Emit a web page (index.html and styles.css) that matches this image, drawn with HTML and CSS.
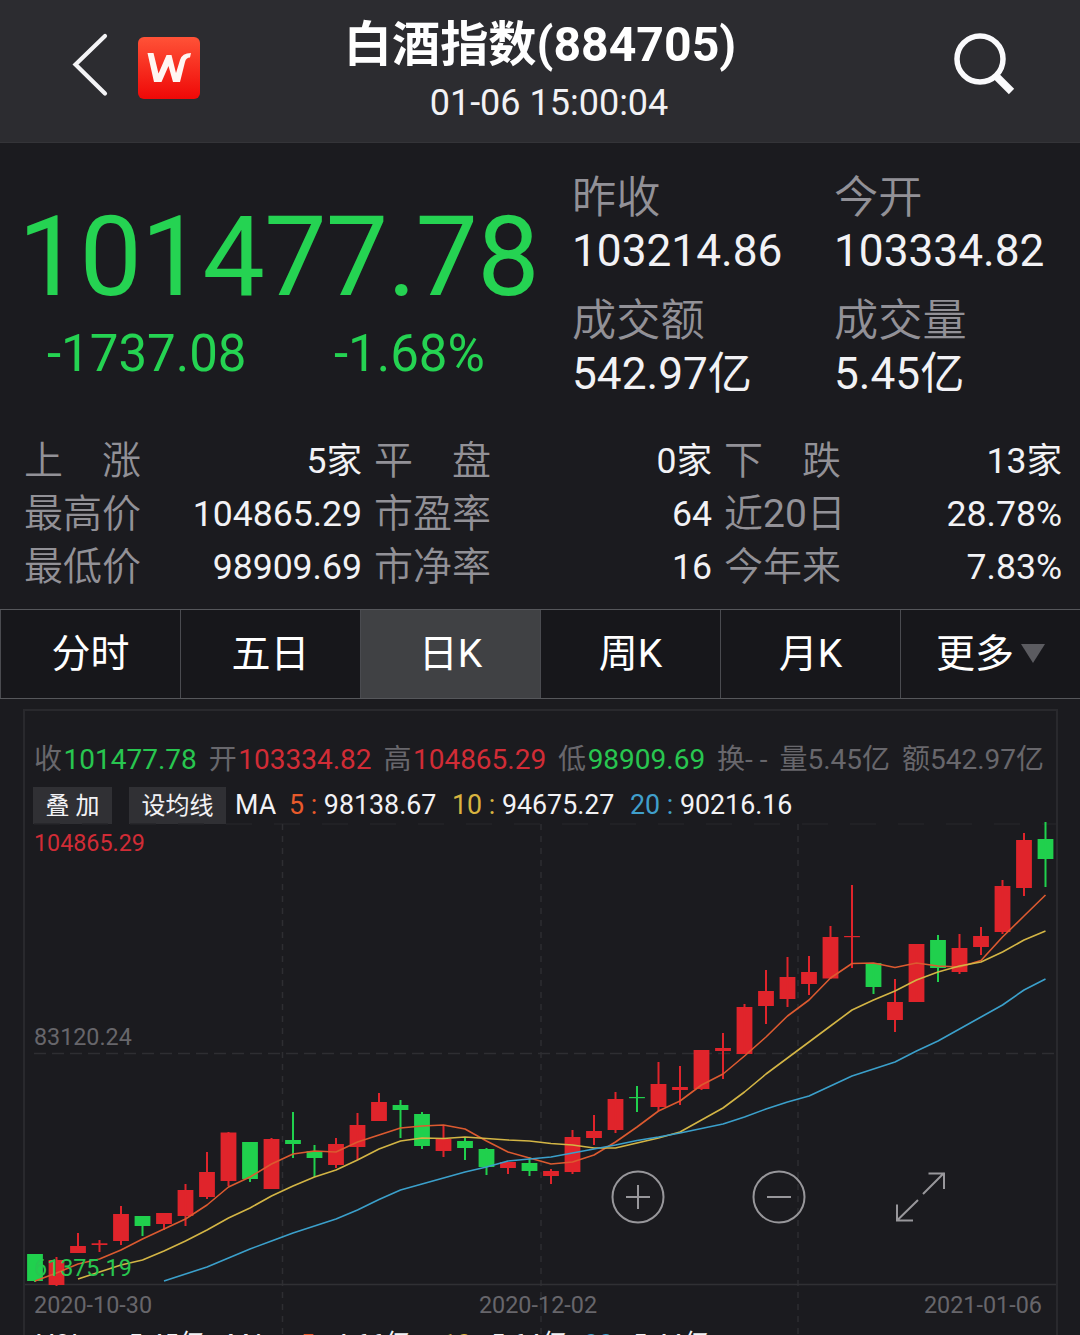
FILE: index.html
```html
<!DOCTYPE html>
<html lang="zh-CN">
<head>
<meta charset="utf-8">
<title>白酒指数(884705)</title>
<link rel="stylesheet" href="styles.css">
</head>
<body>
<div class="app">
  <header class="topbar">
    <div class="topbar-left">
      <svg class="back" viewBox="0 0 36 64" width="36" height="64"><path d="M33 3 3.500 31.500 33 60.500" fill="none" stroke="#f4f4f6" stroke-width="4.200" stroke-linecap="round"/></svg>
      <div class="logo">
        <svg viewBox="0 0 62 62" width="62" height="62"><path d="M9.500 16H15.500L20.500 36.500L28.500 18H33.500L38 36L42 23Q44 16 53 16L52 20.500Q48 20.500 47 25L42 45H35L30.500 29L23.500 45H16Z" fill="#fff6f2"/></svg>
      </div>
    </div>
    <div class="heading">
      <h1 class="title">白酒指数(884705)</h1>
      <div class="time">01-06 15:00:04</div>
    </div>
    <svg class="search" viewBox="0 0 64 64" width="64" height="64"><circle cx="29" cy="27" r="23" fill="none" stroke="#fafafc" stroke-width="5.500"/><path d="M44 43 60.500 59.500" stroke="#fafafc" stroke-width="7.500"/></svg>
  </header>

  <section class="quote">
    <div class="price-block">
      <div class="price">101477.78</div>
      <div class="change"><span>-1737.08</span><span>-1.68%</span></div>
    </div>
    <dl class="facts">
      <div class="fact"><dt>昨收</dt><dd>103214.86</dd></div>
      <div class="fact"><dt>今开</dt><dd>103334.82</dd></div>
      <div class="fact"><dt>成交额</dt><dd>542.97亿</dd></div>
      <div class="fact"><dt>成交量</dt><dd>5.45亿</dd></div>
    </dl>
  </section>

  <dl class="stats">
    <div class="stat"><dt>上　涨</dt><dd>5家</dd></div>
    <div class="stat"><dt>平　盘</dt><dd>0家</dd></div>
    <div class="stat"><dt>下　跌</dt><dd>13家</dd></div>
    <div class="stat"><dt>最高价</dt><dd>104865.29</dd></div>
    <div class="stat"><dt>市盈率</dt><dd>64</dd></div>
    <div class="stat"><dt>近<b>20</b>日</dt><dd>28.78%</dd></div>
    <div class="stat"><dt>最低价</dt><dd>98909.69</dd></div>
    <div class="stat"><dt>市净率</dt><dd>16</dd></div>
    <div class="stat"><dt>今年来</dt><dd>7.83%</dd></div>
  </dl>

  <nav class="tabs">
    <div class="tab">分时</div>
    <div class="tab">五日</div>
    <div class="tab active">日K</div>
    <div class="tab">周K</div>
    <div class="tab">月K</div>
    <div class="tab more">更多<i class="caret"></i></div>
  </nav>

  <section class="chart">
    <div class="info">
      <span>收<b class="down">101477.78</b></span>
      <span>开<b class="up">103334.82</b></span>
      <span>高<b class="up">104865.29</b></span>
      <span>低<b class="down">98909.69</b></span>
      <span>换- -</span>
      <span>量5.45亿</span>
      <span>额542.97亿</span>
    </div>
    <div class="averages">
      <span class="chip chip-add">叠 加</span>
      <span class="chip chip-set">设均线</span>
      <span class="ma-name">MA</span>
      <span class="ma"><b class="ma5">5 :</b> 98138.67</span>
      <span class="ma"><b class="ma10">10 :</b> 94675.27</span>
      <span class="ma"><b class="ma20">20 :</b> 90216.16</span>
    </div>
    <div class="plot">
      <svg class="canvas" id="canvas" viewBox="24 824 1034 460" width="1034" height="460"></svg>
      <span class="label high">104865.29</span>
      <span class="label mid">83120.24</span>
      <span class="label low">61375.19</span>
      <div class="tools">
        <svg viewBox="0 0 56 56" width="56" height="56"><circle cx="28" cy="28" r="25.500"/><path d="M16 28H40M28 16V40"/></svg>
        <svg viewBox="0 0 56 56" width="56" height="56"><circle cx="28" cy="28" r="25.500"/><path d="M16 28H40"/></svg>
        <svg viewBox="0 0 56 56" width="56" height="56"><path d="M31 25 52 4M36.500 4.500H52V20M26 31 5 51.500M5 35.500V51.500H21"/></svg>
      </div>
    </div>
    <div class="dates"><span>2020-10-30</span><span>2020-12-02</span><span>2021-01-06</span></div>
    <div class="volume">
      <span class="v-name">VOL</span>
      <span class="v-total">5.45亿</span>
      <span class="v-ma">MA</span>
      <span class="v-item"><b class="ma5">5 :</b> 4.66亿</span>
      <span class="v-item"><b class="ma10">10 :</b> 5.64亿</span>
      <span class="v-item"><b class="ma20">20 :</b> 5.44亿</span>
    </div>
  </section>
</div>
<script src="chart.js"></script>
</body>
</html>
```

FILE: styles.css
```css
* { box-sizing: border-box; }
body {
  margin: 0;
  background: #1b1b1f;
  color: #f2f2f5;
  font-family: Roboto, "Noto Sans CJK SC", sans-serif;
}
h1, dl, dd { margin: 0; }
b { font-weight: 400; }
.app {
  width: 1080px;
  height: 1335px;
  overflow: hidden;
  display: flex;
  flex-direction: column;
}

.topbar {
  flex: none;
  height: 143px;
  display: grid;
  grid-template-columns: 200px 1fr 200px;
  background: #2c2c30;
  border-bottom: 1px solid #343438;
}
.topbar-left { display: flex; padding: 33px 0 0 72px; }
.back { flex: none; }
.logo {
  flex: none;
  width: 62px;
  height: 62px;
  margin: 4px 0 0 30px;
  border-radius: 6px;
  background: linear-gradient(#ff5237, #ef0807);
}
.heading { display: flex; flex-direction: column; align-items: center; padding-top: 15px; white-space: nowrap; }
.title { font-size: 48.200px; line-height: 60px; font-weight: 700; color: #fff; }
.time { font-size: 36px; line-height: 44px; margin: 6px 0 0 18px; }
.search { margin: 32px 0 0 71px; }

.quote { flex: none; height: 291px; display: flex; padding-left: 18px; }
.price-block { width: 554px; color: #25d352; padding-top: 59px; }
.price { font-size: 111px; line-height: 110px; white-space: nowrap; letter-spacing: -0.850px; }
.change { display: flex; font-size: 51px; line-height: 60px; margin-top: 12px; padding-left: 29px; }
.change span:first-child { width: 287px; }
.facts { display: grid; grid-template-columns: 262px 220px; grid-template-rows: 123px 124px; padding-top: 28px; }
.fact { white-space: nowrap; font-size: 44.200px; }
.fact dt { line-height: 54px; color: #929197; font-weight: 350; }
.fact dd { line-height: 52px; }

.stats {
  flex: none;
  height: 175px;
  display: grid;
  grid-template-columns: repeat(3, 338px);
  grid-template-rows: repeat(3, 53px);
  column-gap: 12px;
  padding: 1px 0 0 24px;
}
.stat { display: flex; justify-content: space-between; line-height: 53px; font-size: 35.600px; white-space: nowrap; }
.stat dt { font-size: 39px; line-height: 52px; color: #929197; font-weight: 350; }

.tabs {
  flex: none;
  height: 90px;
  display: grid;
  grid-template-columns: repeat(6, 180px);
  border: solid #56575b;
  border-width: 1px 0;
  background: #17171b;
}
.tab { border-left: 1px solid #4a4b50; display: flex; align-items: center; justify-content: center; padding-bottom: 8px; font-size: 39px; color: #fff; }
.tab.active { background: #404144; }
.caret { border: solid transparent; border-width: 19px 12px 0; border-top-color: #5b5b60; margin: 7px 0 0 7px; }

.chart {
  flex: none;
  width: 1035px;
  height: 640px;
  margin: 10px 0 0 23px;
  border: 2px solid #29292d;
  border-bottom: 0;
}
.info {
  display: flex;
  justify-content: space-between;
  padding: 29px 12px 0 9px;
  font-size: 28px;
  line-height: 40px;
  color: #68676c;
  white-space: nowrap;
}
.info b { margin-left: 1.500px; }
.down { color: #28c650; }
.up { color: #d12c36; }
.averages { display: flex; height: 44px; padding: 7px 0 0 8px; font-size: 26.800px; line-height: 36px; white-space: nowrap; }
.chip { background: #303034; font-size: 24px; text-align: center; height: 37px; line-height: 38px; }
.chip-add { width: 79px; }
.chip-set { width: 97px; margin-left: 17px; }
.ma-name { width: 54px; margin-left: 9px; }
.ma { width: 163px; }
.ma + .ma { width: 178px; }
.ma5 { color: #e85a2b; }
.ma10 { color: #d8b440; }
.ma20 { color: #409fcb; }
.plot { position: relative; height: 460px; margin-left: -1px; }
.canvas { display: block; overflow: visible; }
.label { position: absolute; left: 10px; font-size: 23.300px; line-height: 28px; }
.high { top: 5px; color: #d12c36; }
.mid { top: 199px; color: #67666b; }
.low { top: 430px; color: #28c650; }
.tools { position: absolute; left: 586px; top: 345px; display: flex; gap: 85px; fill: none; stroke: #98979b; stroke-width: 2; }
.dates { display: flex; justify-content: space-between; padding: 6px 14px 0 9px; font-size: 23.400px; line-height: 30px; color: #67666b; }
.volume { display: flex; margin-top: 7px; padding-left: 12px; font-size: 26px; line-height: 34px; white-space: nowrap; }
.v-name { width: 91px; }
.v-total { width: 99px; }
.v-ma { width: 73px; }
.v-item { width: 142px; }
```

FILE: chart.js
```js
// Each candle: [direction, body top, body bottom, wick top, wick bottom]
const candles = [
  ['g',1254,1281,1254,1282],['r',1260,1285,1257,1286],['r',1246,1253,1233,1253],['r',1243.3,1245,1240,1252],
  ['r',1214,1241,1206,1245],['g',1216,1226,1216,1236],['r',1213,1224,1213,1230],['r',1190,1216,1184,1226],
  ['r',1172,1197,1152,1199],['r',1132.5,1181,1132,1186],['g',1142,1179,1142,1182],['r',1139,1189,1138,1189],
  ['g',1140,1144,1112,1158],['g',1151,1158,1145,1177],['r',1144,1165,1138,1168],['r',1125,1147,1113,1160],
  ['r',1102,1121,1093,1121],['g',1105,1110,1100,1138],['g',1114,1146,1112,1149],['r',1139,1151,1125,1157],
  ['g',1141,1148,1138,1160],['g',1149,1167,1148,1175],['r',1162,1168,1162,1174],['g',1163,1171,1157,1176],
  ['r',1171,1176,1169,1184],['r',1137,1172,1130,1174],['r',1131,1138,1115,1145],['r',1099,1130,1092,1133],
  ['g',1097,1098.2,1086,1112],['r',1084,1107,1062,1111],['r',1087,1090,1066,1105],['r',1050,1089,1050,1090],
  ['r',1048,1051,1033,1079],['r',1007,1054,1004,1054],['r',991,1006,970,1024],['r',977,999,957,1007],
  ['r',972,984,956,995],['r',937,978.5,926,979],['r',936,937.2,885,968],['g',963,987,963,994],
  ['r',1002,1020,979,1032],['r',944,1002,944,1002],['g',940,968,935,982],['r',948,972,934,974],
  ['r',936,947,927,955],['r',886,932,880,934],['r',840,888,833,896],['g',839,859,822,887]
];
const step = 21.5;
const originX = 35;

// Moving averages, one point per candle, starting at the given candle
const averages = [
  { color: '#dc5a30', from: 0, y: [1281,1273,1264,1259,1250,1239,1229,1219,1205,1187,1177,1164,1154,1151,1152,1142,1135,1128,1126,1125,1129,1141,1152,1158,1164,1162,1155,1142,1127,1111,1101,1085,1074,1056,1037,1016,1000,978,963.5,963,967.5,963,966,967,960.5,937,916,895] },
  { color: '#d3b545', from: 2, y: [1279,1272,1265,1260,1251,1241,1230,1218,1208,1196,1186,1177,1170,1160,1149,1141,1138,1138.5,1137,1138.5,1140,1141,1143.5,1145,1148,1148,1143,1138,1132,1120,1108,1092,1074,1058,1042,1026,1010,1000,991,980,972,966,962,952,940,931] },
  { color: '#3ba0cb', from: 6, y: [1281,1274,1267,1258,1249,1241,1233,1226,1219,1210,1199.5,1190,1184,1178,1172,1167,1161,1159,1157,1153,1149,1145,1140.5,1137,1133,1128.5,1124,1117,1109,1102,1096,1086,1076,1069,1062,1051,1041,1029,1017,1005,990,979] }
];

let out = '<g fill="none" stroke="#2e2e32" stroke-width="1.5">' +
  '<path d="M34 824H1056" stroke="#242428" stroke-dasharray="26 22"/>' +
  '<path d="M34 1053.5H1056" stroke-dasharray="12 6"/>' +
  '<path d="M282.500 824V1335M541 824V1335M798 824V1335" stroke-dasharray="6 6"/>' +
  '<path d="M25 1284.500H1056" stroke="#303034"/></g>';
candles.forEach(([dir, top, bottom, high, low], i) => {
  const x = originX + i * step;
  const color = dir === 'g' ? '#20d04d' : '#e0242b';
  out += `<rect x="${x - 7.9}" y="${top}" width="15.8" height="${bottom - top}" fill="${color}"/>` +
    `<rect x="${x - 1}" y="${high}" width="2" height="${low - high}" fill="${color}"/>`;
});
averages.forEach(line => {
  const points = line.y.map((y, i) => `${originX + (line.from + i) * step},${y}`).join(' ');
  out += `<polyline points="${points}" fill="none" stroke="${line.color}" stroke-width="1.6" stroke-linejoin="round"/>`;
});
document.getElementById('canvas').innerHTML = out;
```
